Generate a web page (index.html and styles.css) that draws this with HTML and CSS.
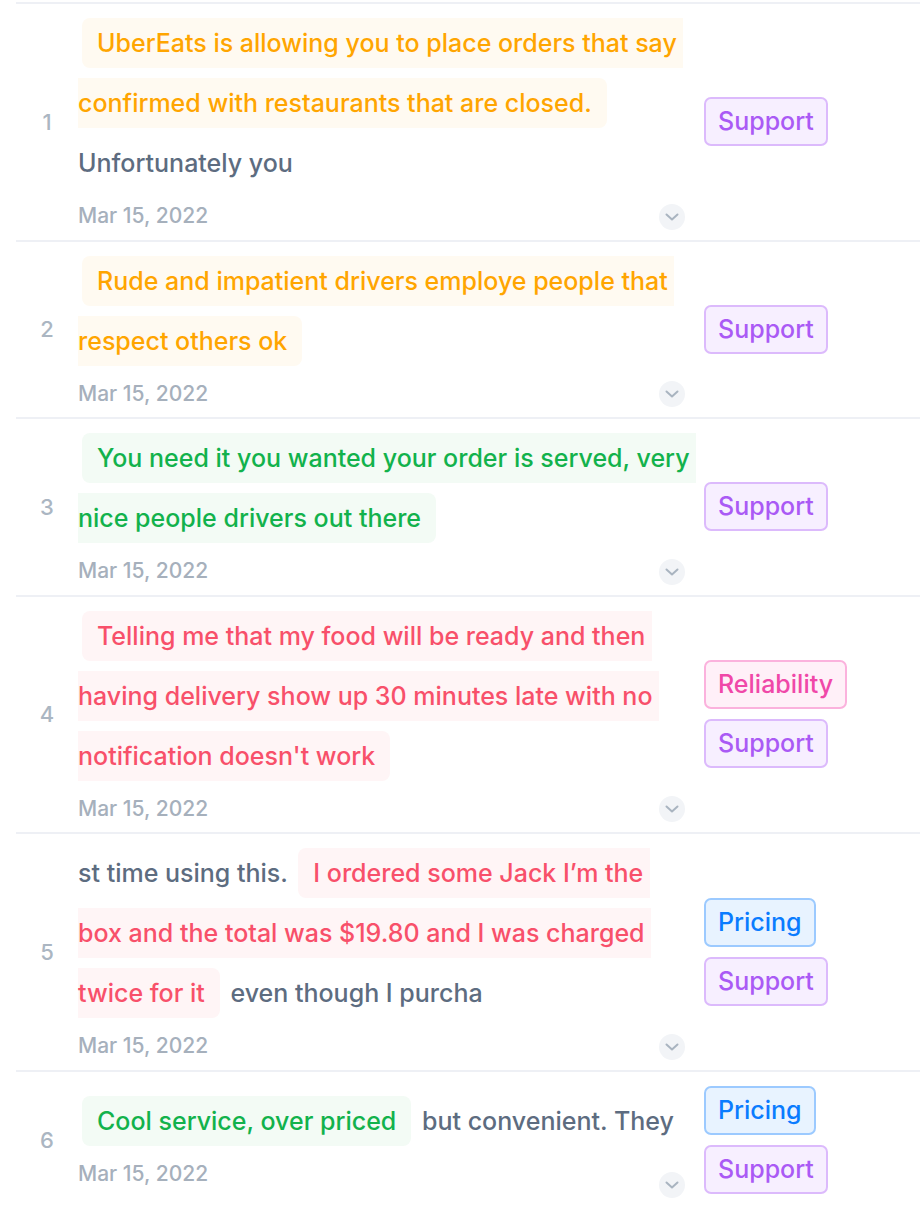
FILE: index.html
```html
<!DOCTYPE html>
<html lang="en">
<head>
<meta charset="utf-8">
<title>Feedback</title>
<link rel="stylesheet" href="styles.css">
</head>
<body>
<div class="table">
  <div class="row">
    <div class="num">1</div>
    <div class="content">
      <p class="text"><span class="hl warn">UberEats is allowing you to place orders that say&nbsp;<br>confirmed with restaurants that are closed.</span><br>Unfortunately you</p>
      <div class="date">Mar 15, 2022</div>
      <button class="expand" type="button"><svg width="14" height="8" viewBox="0 0 14 8"><path d="M1.5 1.5 L7 6.5 L12.5 1.5" fill="none" stroke="#a9b4c0" stroke-width="2" stroke-linecap="round" stroke-linejoin="round"/></svg></button>
    </div>
    <div class="tags"><span class="tag support">Support</span></div>
  </div>

  <div class="row">
    <div class="num">2</div>
    <div class="content">
      <p class="text"><span class="hl warn">Rude and impatient drivers employe people that&nbsp;<br>respect others ok</span></p>
      <div class="date">Mar 15, 2022</div>
      <button class="expand" type="button"><svg width="14" height="8" viewBox="0 0 14 8"><path d="M1.5 1.5 L7 6.5 L12.5 1.5" fill="none" stroke="#a9b4c0" stroke-width="2" stroke-linecap="round" stroke-linejoin="round"/></svg></button>
    </div>
    <div class="tags"><span class="tag support">Support</span></div>
  </div>

  <div class="row">
    <div class="num">3</div>
    <div class="content">
      <p class="text"><span class="hl pos">You need it you wanted your order is served, very&nbsp;<br>nice people drivers out there</span></p>
      <div class="date">Mar 15, 2022</div>
      <button class="expand" type="button"><svg width="14" height="8" viewBox="0 0 14 8"><path d="M1.5 1.5 L7 6.5 L12.5 1.5" fill="none" stroke="#a9b4c0" stroke-width="2" stroke-linecap="round" stroke-linejoin="round"/></svg></button>
    </div>
    <div class="tags"><span class="tag support">Support</span></div>
  </div>

  <div class="row">
    <div class="num">4</div>
    <div class="content">
      <p class="text"><span class="hl neg">Telling me that my food will be ready and then&nbsp;<br>having delivery show up 30 minutes late with no&nbsp;<br>notification doesn't work</span></p>
      <div class="date">Mar 15, 2022</div>
      <button class="expand" type="button"><svg width="14" height="8" viewBox="0 0 14 8"><path d="M1.5 1.5 L7 6.5 L12.5 1.5" fill="none" stroke="#a9b4c0" stroke-width="2" stroke-linecap="round" stroke-linejoin="round"/></svg></button>
    </div>
    <div class="tags"><span class="tag reliability">Reliability</span><span class="tag support">Support</span></div>
  </div>

  <div class="row">
    <div class="num">5</div>
    <div class="content">
      <p class="text">st time using this. <span class="hl neg">I ordered some Jack I’m the&nbsp;<br>box and the total was $19.80 and I was charged&nbsp;<br>twice for it</span> even though I purcha</p>
      <div class="date">Mar 15, 2022</div>
      <button class="expand" type="button"><svg width="14" height="8" viewBox="0 0 14 8"><path d="M1.5 1.5 L7 6.5 L12.5 1.5" fill="none" stroke="#a9b4c0" stroke-width="2" stroke-linecap="round" stroke-linejoin="round"/></svg></button>
    </div>
    <div class="tags"><span class="tag pricing">Pricing</span><span class="tag support">Support</span></div>
  </div>

  <div class="row">
    <div class="num">6</div>
    <div class="content">
      <p class="text"><span class="hl pos">Cool service, over priced</span> but convenient. They</p>
      <div class="date">Mar 15, 2022</div>
      <button class="expand" type="button"><svg width="14" height="8" viewBox="0 0 14 8"><path d="M1.5 1.5 L7 6.5 L12.5 1.5" fill="none" stroke="#a9b4c0" stroke-width="2" stroke-linecap="round" stroke-linejoin="round"/></svg></button>
    </div>
    <div class="tags"><span class="tag pricing">Pricing</span><span class="tag support">Support</span></div>
  </div>
</div>
</body>
</html>
```

FILE: styles.css
```css
* { box-sizing: border-box; }

body {
  margin: 0;
  background: #ffffff;
  font-family: Inter, "Noto Sans", sans-serif;
}

.table {
  margin: 2px 0 0 16px;
}

.row {
  display: grid;
  grid-template-columns: 62px 614px 1fr;
  border-top: 2px solid #eef0f5;
}

.num {
  display: flex;
  align-items: center;
  justify-content: center;
  font-size: 22px;
  font-weight: 500;
  color: #abb6c2;
}

.content {
  position: relative;
  display: flex;
  flex-direction: column;
  justify-content: center;
  padding: 9px 0 8.5px;
}

.text {
  margin: 0;
  font-size: 25px;
  font-weight: 500;
  line-height: 60px;
  color: #5d6c80;
  white-space: nowrap;
}

.hl {
  padding: 10px 15px;
  margin: 0 4px;
  border-radius: 8px;
  -webkit-box-decoration-break: slice;
  box-decoration-break: slice;
}

.hl.warn { color: #ffa500; background: #fffaf1; }
.hl.pos { color: #12b24c; background: #f3fbf5; }
.hl.neg { color: #f8506a; background: #fff5f6; }

.date {
  margin-top: 8px;
  font-size: 21px;
  font-weight: 500;
  line-height: 30px;
  color: #a6b0bc;
}

.expand {
  position: absolute;
  right: 7px;
  bottom: 10px;
  width: 26px;
  height: 26px;
  padding: 0;
  border: 0;
  border-radius: 50%;
  background: #f2f4f7;
  display: flex;
  align-items: center;
  justify-content: center;
}

.tags {
  display: flex;
  flex-direction: column;
  align-items: flex-start;
  justify-content: center;
  gap: 10px;
  padding: 14px 0 14px 12px;
}

.tag {
  font-size: 25px;
  font-weight: 500;
  line-height: 27px;
  padding: 9px 12px;
  border: 2px solid;
  border-radius: 7px;
}

.tag.support { color: #aa5af5; background: #f7efff; border-color: #dcbafc; }
.tag.pricing { color: #0a7cff; background: #e8f3ff; border-color: #9ccaff; }
.tag.reliability { color: #f048a8; background: #fff0f8; border-color: #fbb2dd; }
```
